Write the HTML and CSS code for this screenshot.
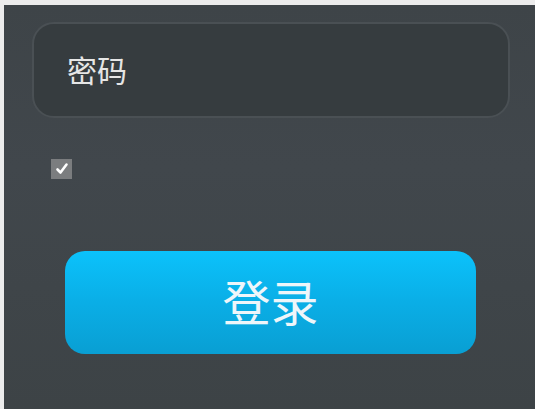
FILE: index.html
```html
<!DOCTYPE html>
<html>
<head>
    <meta charset="utf-8">
    <link rel="stylesheet" href="styles.css">
</head>
<body>
    <div id="login-screen">
        <div class="field">
            <span class="field-label">密码</span>
        </div>
        <div class="remember-row">
            <span class="check-box">
                <svg width="14" height="14" viewBox="0 0 14 14">
                    <path d="M2.5 7.5 L5.5 10.5 L11.5 2.5" fill="none" stroke="#ffffff" stroke-width="2.6" stroke-linecap="round" stroke-linejoin="round"/>
                </svg>
            </span>
        </div>
        <button class="login-button">登录</button>
    </div>
</body>
</html>
```

FILE: styles.css
```css
html, body {
    margin: 0;
    height: 100%;
}

body {
    background-color: #ececec;
    font-family: "Noto Sans CJK SC", "Noto Sans", sans-serif;
    padding: 5px 0 0 4px;
    box-sizing: border-box;
}

#login-screen {
    height: 100%;
    background: linear-gradient(to bottom, #3e4448 0%, #41474c 40%, #3d4346 100%);
    display: flex;
    flex-direction: column;
    padding: 17px 25px 0 28px;
    box-sizing: border-box;
}

.field {
    height: 96px;
    border: 2px solid #4a5054;
    border-radius: 22px;
    background-color: #363c3f;
    display: flex;
    align-items: center;
    padding-left: 33px;
    box-sizing: border-box;
}

.field-label {
    color: #e6e6e6;
    font-size: 30px;
    line-height: 1;
    margin-top: -3px;
}

.remember-row {
    display: flex;
    margin-top: 41px;
    padding-left: 19px;
}

.check-box {
    width: 21px;
    height: 20px;
    background-color: #7b7d7f;
    display: flex;
    align-items: center;
    justify-content: center;
}

.login-button {
    margin: 72px 0 0 33px;
    width: 411px;
    height: 103px;
    border: none;
    border-radius: 20px;
    background: linear-gradient(to bottom, #0bc2fb 0%, #0aaee6 50%, #099fd3 100%);
    color: #eef6fa;
    font-family: "Noto Sans CJK SC", sans-serif;
    font-size: 48px;
    line-height: 1;
    padding: 0 0 6px 0;
}
```
